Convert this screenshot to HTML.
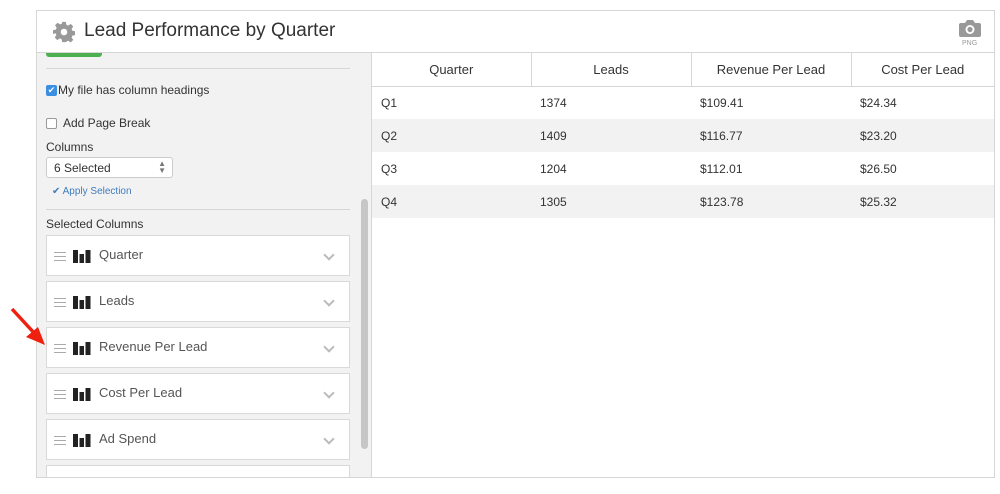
<!DOCTYPE html>
<html><head><style>
*{box-sizing:border-box;margin:0;padding:0}
body{width:1000px;height:494px;background:#fff;font-family:"Liberation Sans",sans-serif;position:relative;overflow:hidden;color:#333}
.a{position:absolute}
.frame{left:36px;top:10px;width:959px;height:468px;border:1px solid #d6d6d6;overflow:hidden}
.hdr{left:0;top:0;width:957px;height:42px;border-bottom:1px solid #d6d6d6;background:#fff}
.left{left:0;top:42px;width:335px;height:426px;background:#f2f2f2;border-right:1px solid #d6d6d6}
.card{position:absolute;left:9px;width:304px;height:41px;background:#fff;border:1px solid #d9d9d9}
.card .t{position:absolute;left:52px;top:11px;font-size:13px;color:#555}
.card .h{position:absolute;left:7px;top:16px;width:12px;height:9px;border-top:1.5px solid #aaa;border-bottom:1.5px solid #aaa}
.card .h:after{content:"";position:absolute;left:0;top:2.5px;width:12px;border-top:1.5px solid #aaa}
.card .b{position:absolute;left:26px;top:14px}
.card .c{position:absolute;right:16px;top:15px;width:8px;height:8px;border-right:2px solid #bbb;border-bottom:2px solid #bbb;transform:rotate(45deg)}
table{position:absolute;left:335px;top:42px;width:622px;border-collapse:collapse;font-size:12px}
th{height:33px;font-weight:normal;font-size:13px;border-right:1px solid #d6d6d6;border-bottom:1px solid #d6d6d6;text-align:center;color:#333}
td{height:33px;padding-left:9px;color:#333}
tr.g td{background:#f2f2f2}
</style></head><body>
<div class="a frame">
 <div class="a hdr">
  <svg class="a" style="left:16px;top:10px" width="22" height="22" viewBox="0 0 24 24"><path fill="#999" d="M10 1h4l.6 3.1 2 .9 2.7-1.8 2.8 2.8-1.8 2.7.9 2 3.1.6v4l-3.1.6-.9 2 1.8 2.7-2.8 2.8-2.7-1.8-2 .9L14 23h-4l-.6-3.1-2-.9-2.7 1.8-2.8-2.8 1.8-2.7-.9-2L0 14v-4l3.1-.6.9-2L2.2 4.7 5 1.9l2.7 1.8 2-.9z"/><circle cx="12" cy="12" r="3.6" fill="#fff"/></svg>
  <div class="a" style="left:47px;top:9px;font-size:19px;color:#333">Lead Performance by Quarter</div>
  <svg class="a" style="left:922px;top:8px" width="22" height="18" viewBox="0 0 22 18"><path fill="#999" d="M2 4h4l2-3h6l2 3h4q2 0 2 2v10q0 2-2 2H2q-2 0-2-2V6q0-2 2-2z"/><circle cx="11" cy="10.5" r="4.5" fill="#fff"/><circle cx="11" cy="10.5" r="2.6" fill="#999"/></svg>
  <div class="a" style="left:925px;top:29px;font-size:7px;color:#999">PNG</div>
 </div>
 <div class="a left">
  <div class="a" style="left:9px;top:0;width:56px;height:4px;background:#4cb050;border-radius:0 0 3px 3px"></div>
  <div class="a" style="left:9px;top:15px;width:304px;border-top:1px solid #d6d6d6"></div>
  <div class="a" style="left:9px;top:32px;width:11px;height:11px;background:#3b8fe0;border-radius:2px;color:#fff;font-size:9px;line-height:11px;text-align:center">✔</div>
  <div class="a" style="left:21px;top:30px;font-size:12px;color:#333">My file has column headings</div>
  <div class="a" style="left:9px;top:65px;width:11px;height:11px;background:#fff;border:1px solid #999;border-radius:2px"></div>
  <div class="a" style="left:26px;top:63px;font-size:12px;color:#333">Add Page Break</div>
  <div class="a" style="left:9px;top:87px;font-size:12px;color:#333">Columns</div>
  <div class="a" style="left:9px;top:104px;width:127px;height:21px;background:#fff;border:1px solid #ccc;border-radius:3px;font-size:12px;padding:3px 0 0 7px">6 Selected<span style="position:absolute;right:6px;top:2px;font-size:8px;color:#777;line-height:7px">▲<br>▼</span></div>
  <div class="a" style="left:15px;top:133px;font-size:10px;color:#3f7cbf">✔ Apply Selection</div>
  <div class="a" style="left:9px;top:156px;width:304px;border-top:1px solid #d6d6d6"></div>
  <div class="a" style="left:9px;top:164px;font-size:12px;color:#333">Selected Columns</div>
  <div class="a" style="left:324px;top:146px;width:7px;height:250px;background:#c6c6c6;border-radius:4px"></div>
  <div class="card" style="top:182px"><div class="h"></div><svg class="b" width="18" height="13"><rect x="0" y="0" width="5" height="13" fill="#222"/><rect x="6.5" y="4" width="4.5" height="9" fill="#222"/><rect x="12.5" y="0" width="5" height="13" fill="#222"/></svg><div class="t">Quarter</div><div class="c"></div></div>
  <div class="card" style="top:228px"><div class="h"></div><svg class="b" width="18" height="13"><rect x="0" y="0" width="5" height="13" fill="#222"/><rect x="6.5" y="4" width="4.5" height="9" fill="#222"/><rect x="12.5" y="0" width="5" height="13" fill="#222"/></svg><div class="t">Leads</div><div class="c"></div></div>
  <div class="card" style="top:274px"><div class="h"></div><svg class="b" width="18" height="13"><rect x="0" y="0" width="5" height="13" fill="#222"/><rect x="6.5" y="4" width="4.5" height="9" fill="#222"/><rect x="12.5" y="0" width="5" height="13" fill="#222"/></svg><div class="t">Revenue Per Lead</div><div class="c"></div></div>
  <div class="card" style="top:320px"><div class="h"></div><svg class="b" width="18" height="13"><rect x="0" y="0" width="5" height="13" fill="#222"/><rect x="6.5" y="4" width="4.5" height="9" fill="#222"/><rect x="12.5" y="0" width="5" height="13" fill="#222"/></svg><div class="t">Cost Per Lead</div><div class="c"></div></div>
  <div class="card" style="top:366px"><div class="h"></div><svg class="b" width="18" height="13"><rect x="0" y="0" width="5" height="13" fill="#222"/><rect x="6.5" y="4" width="4.5" height="9" fill="#222"/><rect x="12.5" y="0" width="5" height="13" fill="#222"/></svg><div class="t">Ad Spend</div><div class="c"></div></div>
  <div class="card" style="top:412px"></div>
 </div>
 <table>
  <tr><th style="width:159px">Quarter</th><th style="width:160px">Leads</th><th style="width:160px">Revenue Per Lead</th><th style="border-right:none">Cost Per Lead</th></tr>
  <tr><td>Q1</td><td>1374</td><td>$109.41</td><td>$24.34</td></tr>
  <tr class="g"><td>Q2</td><td>1409</td><td>$116.77</td><td>$23.20</td></tr>
  <tr><td>Q3</td><td>1204</td><td>$112.01</td><td>$26.50</td></tr>
  <tr class="g"><td>Q4</td><td>1305</td><td>$123.78</td><td>$25.32</td></tr>
 </table>
</div>
<svg class="a" style="left:8px;top:305px" width="40" height="42"><line x1="4" y1="4" x2="28" y2="30" stroke="#f02010" stroke-width="3.5"/><polygon points="37,40 18,32 30,22" fill="#f02010"/></svg>
</body></html>
